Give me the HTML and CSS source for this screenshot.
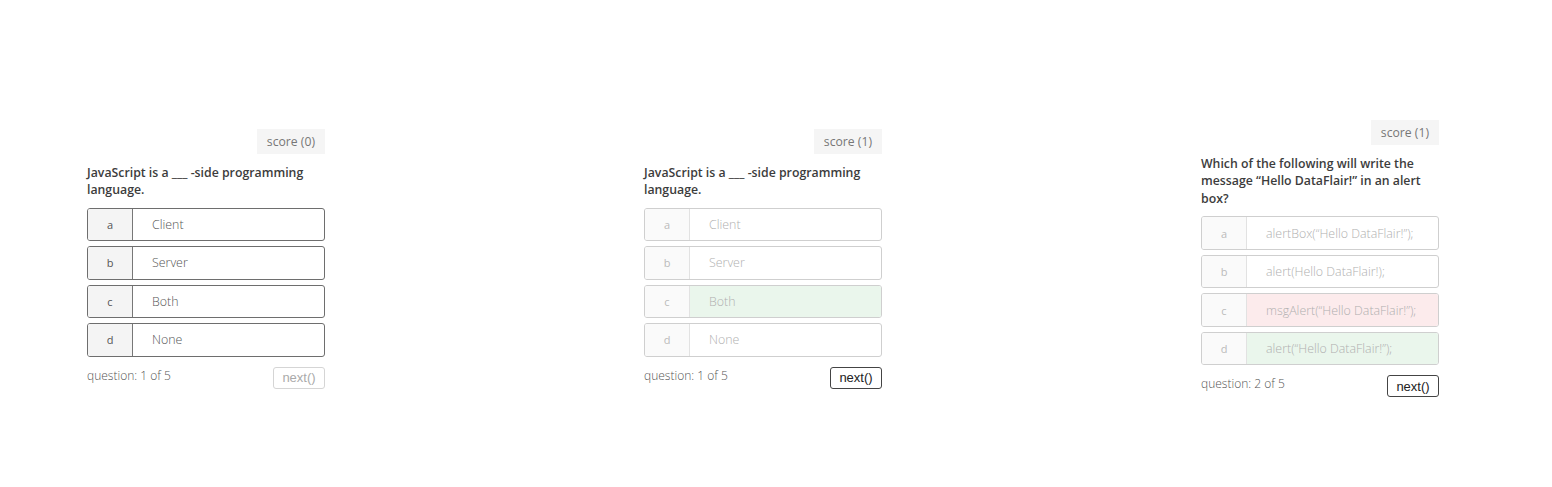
FILE: index.html
```html
<!DOCTYPE html>
<html lang="en">
<head>
<meta charset="utf-8">
<title>Quiz</title>
<link rel="stylesheet" href="styles.css">
</head>
<body>
<main class="stage">
  <section class="quiz">
    <div class="score-row"><span class="score">score (0)</span></div>
    <p class="question">JavaScript is a ___ -side programming language.</p>
    <ul class="options">
      <li class="option"><span class="key">a</span><span class="label">Client</span></li>
      <li class="option"><span class="key">b</span><span class="label">Server</span></li>
      <li class="option"><span class="key">c</span><span class="label">Both</span></li>
      <li class="option"><span class="key">d</span><span class="label">None</span></li>
    </ul>
    <div class="footer">
      <span class="progress">question: 1 of 5</span>
      <button class="next" disabled>next()</button>
    </div>
  </section>

  <section class="quiz answered">
    <div class="score-row"><span class="score">score (1)</span></div>
    <p class="question">JavaScript is a ___ -side programming language.</p>
    <ul class="options">
      <li class="option"><span class="key">a</span><span class="label">Client</span></li>
      <li class="option"><span class="key">b</span><span class="label">Server</span></li>
      <li class="option correct"><span class="key">c</span><span class="label">Both</span></li>
      <li class="option"><span class="key">d</span><span class="label">None</span></li>
    </ul>
    <div class="footer">
      <span class="progress">question: 1 of 5</span>
      <button class="next">next()</button>
    </div>
  </section>

  <section class="quiz answered">
    <div class="score-row"><span class="score">score (1)</span></div>
    <p class="question">Which of the following will write the message “Hello DataFlair!” in an alert box?</p>
    <ul class="options">
      <li class="option"><span class="key">a</span><span class="label">alertBox(“Hello DataFlair!”);</span></li>
      <li class="option"><span class="key">b</span><span class="label">alert(Hello DataFlair!);</span></li>
      <li class="option wrong"><span class="key">c</span><span class="label">msgAlert(“Hello DataFlair!”);</span></li>
      <li class="option correct"><span class="key">d</span><span class="label">alert(“Hello DataFlair!”);</span></li>
    </ul>
    <div class="footer">
      <span class="progress">question: 2 of 5</span>
      <button class="next">next()</button>
    </div>
  </section>
</main>
</body>
</html>
```
FILE: styles.css
```css
* { box-sizing: border-box; }
html, body { margin: 0; padding: 0; background: #fff; }
body { font-family: "Open Sans", "Liberation Sans", sans-serif; color: #333; }

.stage {
  display: flex;
  align-items: center;
  min-height: 487px;
  padding: 30px 0 0 87px;
  gap: 319px;
}

.quiz { width: 238px; }

.score-row { display: flex; justify-content: flex-end; }
.score {
  display: inline-block;
  height: 25px;
  line-height: 25px;
  padding: 0 10px;
  background: #f5f5f5;
  color: #777;
  font-size: 12.2px;
  font-weight: 400;
}

.question {
  margin: 10px 0 9px;
  font-size: 12.3px;
  line-height: 17.5px;
  font-weight: 600;
  color: #3c3c3c;
}

.options {
  list-style: none;
  margin: 0;
  padding: 0;
  display: flex;
  flex-direction: column;
  gap: 5px;
}

.option {
  display: flex;
  height: 33.5px;
  border: 1px solid #6e6e6e;
  border-radius: 3px;
  overflow: hidden;
  font-size: 12.4px;
  font-weight: 300;
  color: #555;
}
.key {
  width: 45px;
  flex: none;
  display: flex;
  align-items: center;
  justify-content: center;
  background: #f4f4f4;
  border-right: 1px solid #777;
  font-weight: 400;
  font-size: 11px;
}
.label {
  flex: 1;
  display: flex;
  align-items: center;
  padding-left: 19px;
}

.answered .option { border-color: #cfcfcf; color: #b0b0b0; }
.answered .key { background: #fafafa; border-right-color: #e2e2e2; color: #bbb; }
.answered .correct .label { background: #eaf6ec; }
.answered .wrong .label { background: #fcebec; }

.footer {
  display: flex;
  justify-content: space-between;
  align-items: flex-start;
  margin-top: 10px;
}
.progress {
  font-size: 12px;
  font-weight: 300;
  color: #555;
  line-height: 17px;
}
.next {
  width: 52px;
  height: 22px;
  padding: 0;
  background: #fff;
  border: 1px solid #444;
  border-radius: 3px;
  font-family: "Liberation Sans", Arial, sans-serif;
  font-size: 13px;
  color: #222;
}
.next:disabled { border-color: #d5d5d5; color: #aaa; }
```
